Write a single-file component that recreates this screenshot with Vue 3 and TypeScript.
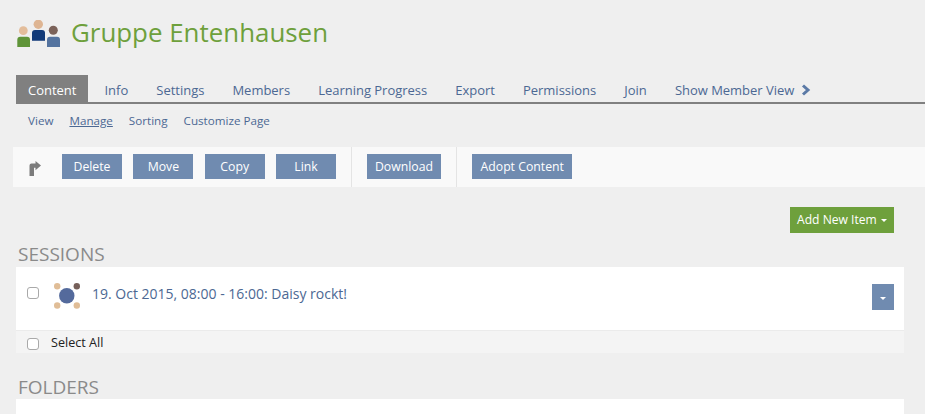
<script setup lang="ts">
const tabs = ['Info', 'Settings', 'Members', 'Learning Progress', 'Export', 'Permissions', 'Join']
const subTabs = ['View', 'Manage', 'Sorting', 'Customize Page']
const actions = ['Delete', 'Move', 'Copy', 'Link']
</script>

<template>
  <div class="page">
    <header class="head">
      <svg class="group-icon" width="44" height="30" viewBox="0 0 44 30">
        <circle cx="6.300" cy="10.700" r="4.400" fill="#e3bd9b" />
        <path d="M0.300 27v-7.300q0-3 3-3h6.700q3 0 3 3V27z" fill="#5f9438" />
        <circle cx="21.300" cy="4.300" r="4.700" fill="#deb593" />
        <path d="M15 20.700v-7.700q0-3 3-3h7q3 0 3 3v7.700z" fill="#123a78" />
        <circle cx="36.300" cy="10.300" r="4.500" fill="#7b6259" />
        <path d="M30 27v-7.300q0-3 3-3h7q3 0 3 3V27z" fill="#54739f" />
      </svg>
      <h1>Gruppe Entenhausen</h1>
    </header>

    <nav class="tabs">
      <a class="tab active">Content</a>
      <a v-for="t in tabs" :key="t" class="tab">{{ t }}</a>
      <a class="tab">Show Member View
        <svg class="chev" width="10" height="12" viewBox="0 0 10 12">
          <polyline points="2,1.500 7,6 2,10.500" fill="none" stroke="#5b7aa6" stroke-width="3" />
        </svg>
      </a>
    </nav>

    <nav class="subtabs">
      <a v-for="s in subTabs" :key="s" :class="{ current: s === 'Manage' }">{{ s }}</a>
    </nav>

    <div class="toolbar">
      <svg class="turn" width="13" height="16" viewBox="0 0 13 16">
        <path d="M0.500 15V4.500q0-2 2-2H6.500V0L12 4.600 6.500 9.300V6.700H5V15z" fill="#7c7c7c" />
      </svg>
      <div class="group first">
        <button v-for="a in actions" :key="a" class="btn">{{ a }}</button>
      </div>
      <div class="group">
        <button class="btn">Download</button>
      </div>
      <div class="group last">
        <button class="btn">Adopt Content</button>
      </div>
    </div>

    <div class="add-row">
      <button class="add">Add New Item <i class="caret"></i></button>
    </div>

    <h2>SESSIONS</h2>
    <section class="card">
      <input type="checkbox" class="check" />
      <svg class="session-icon" width="28" height="28" viewBox="0 0 28 28">
        <circle cx="4.200" cy="4.200" r="3.200" fill="#e0bd97" />
        <circle cx="23.800" cy="4.200" r="3.200" fill="#76605a" />
        <circle cx="4.200" cy="23.500" r="3.200" fill="#e0bd97" />
        <circle cx="23.800" cy="23.500" r="3.200" fill="#e0bd97" />
        <circle cx="13.800" cy="13.800" r="7.700" fill="#546a9c" />
      </svg>
      <a class="session-link">19. Oct 2015, 08:00 - 16:00: Daisy rockt!</a>
      <button class="menu-btn"><i class="caret"></i></button>
    </section>
    <div class="select-all">
      <input type="checkbox" class="check" />
      <span>Select All</span>
    </div>

    <h2 class="folders">FOLDERS</h2>
    <section class="card empty"></section>
  </div>
</template>

<style scoped>
.page {
  height: 414px;
  overflow: hidden;
  box-sizing: border-box;
  padding-top: 14px;
  background: #efefef;
  font-family: "Open Sans", sans-serif;
  font-size: 13px;
  color: #000;
}

.head {
  display: flex;
  align-items: center;
  height: 36px;
  padding-left: 17px;
}

.group-icon {
  flex: none;
  margin-top: 6px;
}

h1 {
  margin: 0 0 0 10px;
  font-size: 25.900px;
  font-weight: 400;
  line-height: 36px;
  color: #6ea03c;
}

.tabs {
  display: flex;
  height: 27px;
  margin: 25px 0 0 16px;
  border-bottom: 2px solid #808080;
  letter-spacing: -0.02px;
}

.tab {
  padding: 0 12px 0 16.100px;
  line-height: 30px;
  color: #4c6893;
  white-space: nowrap;
}

.tab.active {
  padding: 0 12px;
  background: #808080;
  color: #fff;
}

.chev {
  margin-left: 3px;
  vertical-align: -1px;
}

.subtabs {
  display: flex;
  gap: 16px;
  height: 16px;
  margin-top: 9px;
  padding-left: 28px;
  font-size: 11.650px;
  line-height: 16px;
  color: #4c6893;
}

.subtabs .current {
  text-decoration: underline;
}

.toolbar {
  display: flex;
  align-items: flex-start;
  height: 40px;
  margin: 18px 0 0 13px;
  background: #f9f9f9;
}

.turn {
  flex: none;
  margin: 14px 0 0 16px;
}

.group {
  display: flex;
  gap: 11.330px;
  height: 40px;
  box-sizing: border-box;
  padding: 7px 15px;
  border-right: 1px solid #e4e4e4;
}

.group.first {
  margin-left: 20px;
  padding-left: 0;
}

.group.last {
  border-right: 0;
}

.btn {
  height: 25px;
  min-width: 60px;
  padding: 0 8px;
  border: 0;
  background: #708bb0;
  color: #fff;
  font: 12.250px "Open Sans", sans-serif;
}

.group.last .btn {
  padding: 0 8.500px;
}

.add-row {
  display: flex;
  justify-content: flex-end;
  height: 26px;
  margin-top: 20px;
  padding-right: 31px;
}

.add {
  width: 104px;
  height: 26px;
  padding: 0 0 2px;
  border: 0;
  background: #6ea03c;
  color: #fff;
  font: 12.100px "Open Sans", sans-serif;
}

.caret {
  display: inline-block;
  width: 0;
  height: 0;
  margin-left: 1px;
  vertical-align: 2px;
  border-top: 3px solid #fff;
  border-left: 3px solid transparent;
  border-right: 3px solid transparent;
}

h2 {
  margin: 8px 0 0 18px;
  height: 26px;
  font-size: 19px;
  font-weight: 400;
  line-height: 26px;
  color: #8a8a8a;
}

.card {
  display: flex;
  align-items: flex-start;
  height: 63px;
  margin: 0 21px 0 16px;
  background: #fff;
  border-bottom: 1px solid #ebebeb;
}

.check {
  flex: none;
  appearance: none;
  box-sizing: border-box;
  width: 12px;
  height: 12px;
  margin: 20px 0 0 11px;
  background: #fff;
  border: 1px solid #a9a9a9;
  border-radius: 3px;
}

.session-icon {
  flex: none;
  margin: 15px 0 0 14px;
}

.session-link {
  margin: 17px 0 0 11px;
  font-size: 14px;
  line-height: 20px;
  color: #4c6893;
}

.menu-btn {
  width: 22px;
  height: 26px;
  margin: 17px 10px 0 auto;
  padding: 0 0 2px;
  border: 0;
  background: #708bb0;
}

.menu-btn .caret {
  margin-left: 0;
  vertical-align: 1px;
}

.select-all {
  display: flex;
  align-items: center;
  height: 22px;
  margin: 0 21px 0 16px;
  background: #f4f4f4;
  color: #222;
  font-size: 12.600px;
}

.select-all .check {
  margin: 3px 0 0 11px;
}

.select-all span {
  margin-left: 12px;
  padding-top: 1px;
}

.folders {
  margin-top: 21px;
}

.empty {
  border: 0;
  margin-top: -1px;
  height: 40px;
}
</style>
